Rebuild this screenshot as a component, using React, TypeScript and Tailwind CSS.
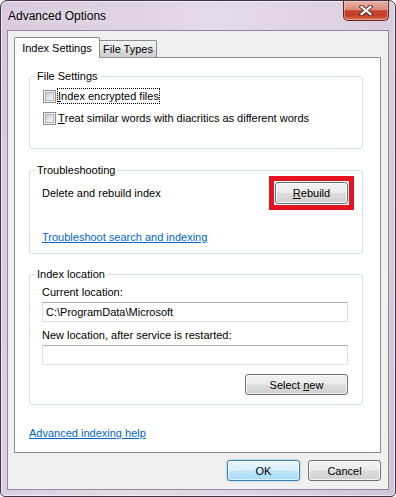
import React from "react";

function Btn({ className, children }: { className: string; children: React.ReactNode }) {
  return (
    <div className={className}>
      <span className="leading-[14px]">{children}</span>
    </div>
  );
}

const stdBtn =
  "h-[21px] rounded-[3px] border border-[#707070] bg-[linear-gradient(180deg,#f2f2f2_0%,#ebebeb_48%,#dddddd_52%,#cfcfcf_100%)] shadow-[inset_0_0_0_1px_rgba(255,255,255,0.75)] flex items-center justify-center text-[11px] text-black";

function Checkbox() {
  return (
    <span className="ml-[1px] w-[13px] h-[13px] border border-[#8e8f8f] bg-[#f4f4f4] p-[1px] flex shrink-0">
      <span className="flex-1 border border-[#aeb3b9] bg-[linear-gradient(135deg,#cbcfd5_0%,#e4e6e9_55%,#f6f6f6_100%)]" />
    </span>
  );
}

export default function App() {
  return (
    <div className="w-[396px] h-[497px] flex flex-col border border-[#3d3848] rounded-t-[7px] rounded-b-[5px] px-[6px] pb-[6px] bg-[linear-gradient(100deg,#d8c9dc_0%,#e5dae8_45%,#ded1e2_75%,#d4c3d9_100%)] shadow-[inset_0_0_0_1px_rgba(255,255,255,0.55)] font-['Liberation_Sans',Arial,sans-serif] text-black overflow-hidden">
      {/* Title bar */}
      <div className="h-[29px] flex items-start justify-between shrink-0">
        <div className="h-full flex items-center pl-[1px] text-[12px] [text-shadow:0_0_6px_rgba(255,255,255,0.9)]">
          Advanced Options
        </div>
        <div className="w-[46px] h-[20px] border border-t-0 border-[#5b2a25] rounded-b-[5px] bg-[linear-gradient(180deg,#e8b3a8_0%,#da8c7a_45%,#c4402a_52%,#c3412a_78%,#e07a55_100%)] shadow-[inset_0_0_0_1px_rgba(255,210,200,0.45)] flex items-center justify-center">
          <svg width="14" height="11" viewBox="0 0 14 11">
            <path d="M2.5 1.8 L11.5 9.2 M11.5 1.8 L2.5 9.2" stroke="#4a1d16" strokeWidth="4" strokeLinecap="square" />
            <path d="M2.5 1.8 L11.5 9.2 M11.5 1.8 L2.5 9.2" stroke="#ffffff" strokeWidth="2.2" strokeLinecap="square" />
          </svg>
        </div>
      </div>

      {/* Client area */}
      <div className="flex-1 border border-[#8f8a98] bg-[#f0f0f0] flex flex-col pt-[6px]">
        {/* Tabs */}
        <div className="h-[20px] ml-[6px] flex items-end relative z-10">
          <div className="relative z-10 w-[86px] h-[21px] -mb-[1px] bg-white border border-b-0 border-[#898c95] rounded-t-[2px] flex items-center justify-center text-[11px]">
            Index Settings
          </div>
          <div className="-ml-[1px] w-[58px] h-[17px] border border-b-0 border-[#898c95] rounded-t-[2px] bg-[linear-gradient(180deg,#f2f2f2_0%,#ebebeb_50%,#dddddd_51%,#cfcfcf_100%)] flex items-center justify-center text-[11px]">
            File Types
          </div>
        </div>

        {/* Tab panel */}
        <div className="ml-[6px] w-[367px] h-[396px] border border-[#898c95] bg-white flex flex-col shrink-0">
          {/* File Settings */}
          <fieldset className="mt-[11px] ml-[14px] w-[334px] border border-[#d5dfe5] rounded-[3px] pl-[5px] pr-[14px] pt-[5px] pb-[22px] text-[11px]">
            <legend className="px-[2px] leading-[14px]">File Settings</legend>
            <div className="pl-[7px] flex flex-col gap-[6px]">
              <div className="h-[16px] flex items-center">
                <Checkbox />
                <span className="ml-[1px] h-[16px] flex items-center border border-dotted border-black leading-[14px]">
                  <span className="underline">I</span>ndex encrypted files
                </span>
              </div>
              <div className="h-[16px] flex items-center">
                <Checkbox />
                <span className="ml-[1px] h-[16px] flex items-center border border-transparent leading-[14px]">
                  <span className="underline">T</span>reat similar words with diacritics as different words
                </span>
              </div>
            </div>
          </fieldset>

          {/* Troubleshooting */}
          <fieldset className="mt-[14px] ml-[14px] w-[334px] border border-[#d5dfe5] rounded-[3px] pl-[5px] pr-[14px] pt-[5px] pb-[9px] text-[11px]">
            <legend className="px-[2px] leading-[14px]">Troubleshooting</legend>
            <div className="pl-[7px] flex flex-col">
              <div className="h-[22px] flex items-center justify-between">
                <span className="leading-[14px]">Delete and rebuild index</span>
                <div className="-my-[6px] -mr-[6px] border-[5px] border-[#e3141f] p-[1px]">
                  <Btn className="w-[73px] h-[22px] rounded-[3px] border border-[#707070] bg-[linear-gradient(180deg,#f2f2f2_0%,#ebebeb_48%,#dddddd_52%,#cfcfcf_100%)] shadow-[inset_0_0_0_1px_rgba(255,255,255,0.75)] flex items-center justify-center text-[11px] text-black">
                    <span className="underline">R</span>ebuild
                  </Btn>
                </div>
              </div>
              <div className="mt-[26px] h-[14px] leading-[14px]">
                <span className="text-[#0066cc] underline">Troubleshoot search and indexing</span>
              </div>
            </div>
          </fieldset>

          {/* Index location */}
          <fieldset className="mt-[13px] ml-[14px] w-[334px] border border-[#d5dfe5] rounded-[3px] pl-[5px] pr-[14px] pt-[4px] pb-[9px] text-[11px]">
            <legend className="px-[2px] leading-[14px]">Index location</legend>
            <div className="pl-[7px] flex flex-col">
              <div className="h-[14px] leading-[14px]">Current location:</div>
              <div className="mt-[3px] h-[20px] border border-[#dbdfe6] border-t-[#abadb3] bg-white flex items-center pl-[3px] leading-[14px]">
                C:\ProgramData\Microsoft
              </div>
              <div className="mt-[6px] h-[14px] leading-[14px]">New location, after service is restarted:</div>
              <div className="mt-[3px] h-[20px] border border-[#dbdfe6] border-t-[#abadb3] bg-white" />
              <div className="mt-[9px] flex justify-end">
                <Btn className={"w-[103px] " + stdBtn}>
                  Select <span className="underline">n</span>ew
                </Btn>
              </div>
            </div>
          </fieldset>

          <div className="mt-[21px] ml-[14px] h-[14px] leading-[14px] text-[11px]">
            <span className="text-[#0066cc] underline">Advanced indexing help</span>
          </div>
        </div>

        {/* Bottom buttons */}
        <div className="mt-[7px] mr-[7px] flex justify-end gap-[8px]">
          <Btn className="w-[73px] h-[21px] rounded-[3px] border border-[#3c7fb1] bg-[linear-gradient(180deg,#eaf6fd_0%,#d9f0fc_48%,#bee6fd_52%,#a7d9f5_100%)] shadow-[inset_0_0_0_1px_rgba(255,255,255,0.6),0_0_2px_rgba(60,127,177,0.6)] flex items-center justify-center text-[11px] text-black">
            OK
          </Btn>
          <Btn className={"w-[73px] " + stdBtn}>Cancel</Btn>
        </div>
      </div>
    </div>
  );
}
